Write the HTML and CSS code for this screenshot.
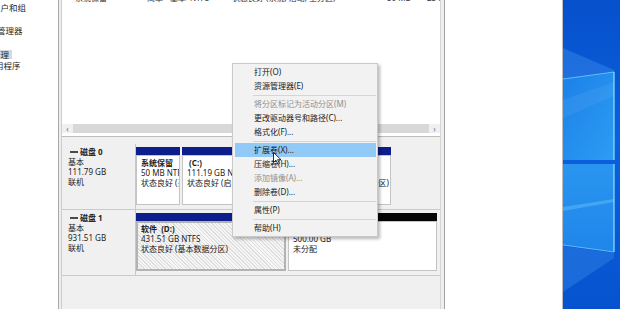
FILE: index.html
```html
<!DOCTYPE html>
<html lang="zh-CN">
<head>
<meta charset="utf-8">
<title>磁盘管理</title>
<link rel="stylesheet" href="styles.css">
</head>
<body>
<div class="screen">
  <nav class="tree">
    <div class="tree-item lvl2">本地用户和组</div>
    <div class="tree-item lvl2">性能</div>
    <div class="tree-item lvl2b">设备管理器</div>
    <div class="tree-item lvl1">存储</div>
    <div class="tree-item lvl2"><span class="sel">磁盘管理</span></div>
    <div class="tree-item lvl1">服务和应用程序</div>
  </nav>
  <div class="split"></div>
  <main class="center">
    <section class="list">
      <div class="list-row">
        <span class="c-icon"></span>
        <span class="c-name">系统保留</span>
        <span class="c-layout">简单</span>
        <span class="c-type">基本</span>
        <span class="c-fs">NTFS</span>
        <span class="c-status">状态良好 (系统, 活动, 主分区)</span>
        <span class="c-cap">50 MB</span>
        <span class="c-free">23 MB</span>
      </div>
      <div class="list-fill"></div>
      <div class="hscroll">
        <span class="hs-arrow">‹</span>
        <span class="hs-thumb"></span>
        <span class="hs-arrow">›</span>
      </div>
    </section>
    <div class="hsplit"></div>
    <section class="disks">
      <div class="disk disk-0">
        <div class="disk-label">
          <div class="disk-name"><span class="disk-icon"></span>磁盘 0</div>
          <div>基本</div>
          <div>111.79 GB</div>
          <div>联机</div>
        </div>
        <div class="parts">
          <div class="part w-sys">
            <div class="part-bar"></div>
            <div class="part-body">
              <div class="b">系统保留</div>
              <div>50 MB NTFS</div>
              <div>状态良好 (系统, 活动, 主分区)</div>
            </div>
          </div>
          <div class="part w-c">
            <div class="part-bar"></div>
            <div class="part-body">
              <div class="b">&nbsp;(C:)</div>
              <div>111.19 GB NTFS</div>
              <div>状态良好 (启动, 页面文件, 故障转储, 主分区)</div>
            </div>
          </div>
          <div class="part w-rec">
            <div class="part-bar"></div>
            <div class="part-body">
              <div>&nbsp;</div>
              <div>562 MB</div>
              <div>状态良好 (恢复分区)</div>
            </div>
          </div>
        </div>
      </div>
      <div class="disk disk-1">
        <div class="disk-label">
          <div class="disk-name"><span class="disk-icon"></span>磁盘 1</div>
          <div>基本</div>
          <div>931.51 GB</div>
          <div>联机</div>
        </div>
        <div class="parts">
          <div class="part w-d">
            <div class="part-bar"></div>
            <div class="part-body selected">
              <div class="b">软件&nbsp;&nbsp;(D:)</div>
              <div>431.51 GB NTFS</div>
              <div>状态良好 (基本数据分区)</div>
            </div>
          </div>
          <div class="part w-free">
            <div class="part-bar black"></div>
            <div class="part-body">
              <div>&nbsp;</div>
              <div>500.00 GB</div>
              <div>未分配</div>
            </div>
          </div>
        </div>
      </div>
    </section>
  </main>
  <div class="split split-r"></div>
  <aside class="actions"></aside>
  <div class="desktop">
    <svg class="wallpaper" viewBox="0 0 57 309" preserveAspectRatio="none" aria-hidden="true">
      <defs>
        <linearGradient id="bg" x1="0" y1="0" x2="0" y2="1">
          <stop offset="0" stop-color="#0650cc"/>
          <stop offset="0.45" stop-color="#0b60dc"/>
          <stop offset="1" stop-color="#0753cf"/>
        </linearGradient>
        <linearGradient id="paneTop" x1="0" y1="0" x2="1" y2="1">
          <stop offset="0" stop-color="#1c80e8"/>
          <stop offset="1" stop-color="#2c9df3"/>
        </linearGradient>
        <linearGradient id="paneBot" x1="0" y1="0" x2="0" y2="1">
          <stop offset="0" stop-color="#2a95f0"/>
          <stop offset="1" stop-color="#1f86ea"/>
        </linearGradient>
      </defs>
      <rect x="0" y="0" width="57" height="309" fill="url(#bg)"/>
      <polygon points="0,48 51,70 51,73 0,79" fill="#4a9cf2" opacity="0.35"/>
      <polygon points="0,246 51,253 51,258 0,292" fill="#4a9cf2" opacity="0.3"/>
      <polygon points="0,79 51,72 51,160 0,160" fill="url(#paneTop)"/>
      <polygon points="0,100 51,82 51,96 0,118" fill="#ffffff" opacity="0.06"/>
      <polygon points="0,164 51,164 51,252 0,245" fill="url(#paneBot)"/>
      <polygon points="0,207 51,199 51,202 0,211" fill="#7fd0ff" opacity="0.35"/>
      <line x1="0" y1="79" x2="51" y2="72" stroke="#6fcfff" stroke-width="0.8"/>
      <line x1="51" y1="72" x2="51" y2="160" stroke="#8ae4ff" stroke-width="1.2"/>
      <line x1="51" y1="164" x2="51" y2="252" stroke="#8ae4ff" stroke-width="1.2"/>
      <line x1="0" y1="245" x2="51" y2="252" stroke="#6fcfff" stroke-width="0.8"/>
    </svg>
  </div>
</div>

<div class="menu">
  <div class="mi">打开(O)</div>
  <div class="mi">资源管理器(E)</div>
  <div class="sep"></div>
  <div class="mi dis">将分区标记为活动分区(M)</div>
  <div class="mi">更改驱动器号和路径(C)...</div>
  <div class="mi">格式化(F)...</div>
  <div class="sep"></div>
  <div class="mi hl">扩展卷(X)...</div>
  <div class="mi">压缩卷(H)...</div>
  <div class="mi dis">添加镜像(A)...</div>
  <div class="mi">删除卷(D)...</div>
  <div class="sep"></div>
  <div class="mi">属性(P)</div>
  <div class="sep"></div>
  <div class="mi">帮助(H)</div>
</div>

<svg class="cursor" viewBox="0 0 9 13" aria-hidden="true">
  <path d="M0.5 0.5 L0.5 10.5 L3 8.2 L4.9 12.2 L6.4 11.5 L4.6 7.7 L8 7.7 Z" fill="#ffffff" stroke="#000000" stroke-width="0.8" stroke-linejoin="round"/>
</svg>
</body>
</html>
```

FILE: styles.css
```css
* { box-sizing: border-box; }

html, body {
  margin: 0;
  padding: 0;
  width: 620px;
  height: 309px;
  overflow: hidden;
  background: #ffffff;
}

body {
  position: relative;
  font-family: "Noto Sans", "Noto Sans CJK SC", sans-serif;
  color: #1b1b1b;
}

.screen {
  display: flex;
  width: 620px;
  height: 309px;
}

/* ---------- left tree ---------- */
.tree {
  width: 58px;
  flex: none;
  background: #ffffff;
  overflow: hidden;
  padding-top: 2px;
  font-size: 8.5px;
  line-height: 11.5px;
  white-space: nowrap;
  font-family: "Noto Sans CJK SC", sans-serif;
  color: #262626;
}

.tree-item { height: 11.5px; }
.lvl2 { margin-left: -25px; }
.lvl2b { margin-left: -20px; }
.lvl1 { margin-left: -39px; }

.sel {
  display: inline-block;
  background: #d9d9d9;
  line-height: 9px;
  padding-right: 3px;
  vertical-align: middle;
}

.split {
  width: 4px;
  flex: none;
  background: #eeeeee;
  border-left: 1px solid #a8a8a8;
  border-right: 1px solid #cdcdcd;
}

.split-r {
  width: 5px;
  border-left: 1px solid #d6d6d6;
  border-right: 1px solid #a3a3a3;
}

/* ---------- center column ---------- */
.center {
  width: 378px;
  flex: none;
  display: flex;
  flex-direction: column;
}

.list {
  height: 136px;
  flex: none;
  background: #ffffff;
  display: flex;
  flex-direction: column;
  overflow: hidden;
}

.list-row {
  display: flex;
  margin-top: -7px;
  height: 10px;
  font-size: 8px;
  line-height: 10px;
  white-space: nowrap;
  color: #333333;
}

.list-row span { overflow: hidden; flex: none; }
.c-icon { width: 13px; }
.c-name { width: 72px; }
.c-layout { width: 23px; }
.c-type { width: 20px; }
.c-fs { width: 42px; }
.c-status { width: 155px; }
.c-cap { width: 40px; }
.c-free { width: 13px; }

.list-fill { flex: 1; }

.hscroll {
  height: 9px;
  margin-bottom: 3px;
  display: flex;
  align-items: center;
  background: #f0f0f0;
}

.hs-arrow {
  width: 11px;
  flex: none;
  text-align: center;
  font-size: 8px;
  line-height: 9px;
  color: #6b6b6b;
}

.hs-thumb {
  flex: 1;
  height: 9px;
  background: #d8d8d8;
}

.hsplit {
  height: 2px;
  flex: none;
  border-top: 1px solid #bdbdbd;
  background: #f0f0f0;
}

/* ---------- disk map ---------- */
.disks {
  flex: 1;
  background: #f0f0f0;
  padding-top: 6px;
}

.disk {
  display: flex;
  border-bottom: 1px solid #cacaca;
}

.disk-label {
  width: 74px;
  flex: none;
  border-right: 1px solid #c8c8c8;
  padding: 3px 0 0 6px;
  font-size: 8px;
  line-height: 10px;
  white-space: nowrap;
  color: #222222;
}

.disk-name {
  display: flex;
  align-items: center;
  font-weight: bold;
}

.disk-icon {
  width: 8px;
  height: 2px;
  background: #4a4a4a;
  margin: 0 2px 0 2px;
}

.parts {
  display: flex;
  gap: 2px;
  padding: 3px 0 4px 0;
}

.part {
  display: flex;
  flex-direction: column;
  flex: none;
}

.w-sys { width: 44px; }
.w-c { width: 129px; }
.w-rec { width: 78px; }
.w-d { width: 150px; }
.w-free { width: 149px; }

.part-bar {
  height: 8px;
  background: #0d1d8c;
}

.part-bar.black { background: #050505; }

.part-body {
  height: 50px;
  border: 1px solid #c4c4c4;
  background: #ffffff;
  padding: 2px 0 0 4px;
  font-size: 8px;
  line-height: 10px;
  white-space: nowrap;
  overflow: hidden;
  color: #222222;
}

.part-body.selected {
  border: 2px solid #b3b3b3;
  padding: 1px 0 0 3px;
  background: repeating-linear-gradient(45deg, #f6f6f6 0 1.5px, #dedede 1.5px 2.5px);
}

.b { font-weight: bold; }

/* ---------- right panes ---------- */
.actions {
  width: 118px;
  flex: none;
  background: #ffffff;
  border-right: 1px solid #bdbdbd;
}

.desktop {
  width: 57px;
  flex: none;
  position: relative;
  overflow: hidden;
}

.wallpaper {
  display: block;
  width: 57px;
  height: 309px;
}

/* ---------- context menu ---------- */
.menu {
  position: absolute;
  left: 232px;
  top: 63px;
  width: 146px;
  height: 174px;
  border: 1px solid #c9c9c9;
  background: #f2f2f2;
  box-shadow: 2px 2px 3px rgba(0, 0, 0, 0.28);
  padding: 1px 0;
  font-family: "Noto Sans", "Noto Sans CJK SC", sans-serif;
  font-size: 8px;
  color: #1a1a1a;
}

.mi {
  height: 14px;
  line-height: 14px;
  margin: 0 1px 0 2px;
  padding-left: 19px;
  white-space: nowrap;
}

.mi.dis { color: #8f8f8f; }
.mi.hl { background: #91c9f7; }

.sep {
  height: 4px;
  display: flex;
  align-items: center;
  padding-left: 20px;
  padding-right: 1px;
}

.sep::after {
  content: "";
  flex: 1;
  height: 1px;
  background: #d5d5d5;
}

.cursor {
  position: absolute;
  left: 273px;
  top: 152px;
  width: 9px;
  height: 13px;
}
```
